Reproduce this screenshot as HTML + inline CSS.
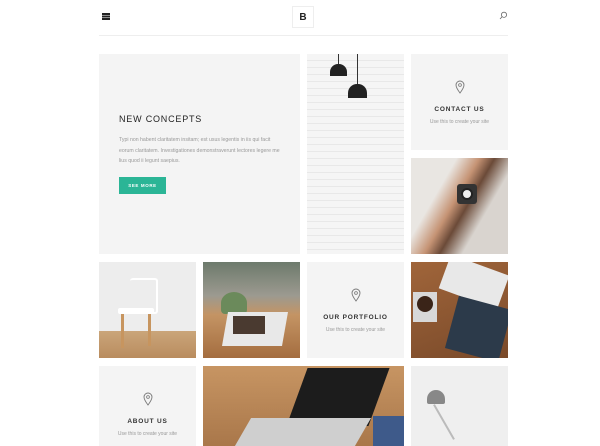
<!DOCTYPE html>
<html><head><style>
body{margin:0;width:600px;height:442px;overflow:hidden;background:#fff;font-family:"Liberation Sans",sans-serif;position:relative}
.a{position:absolute}
.o{overflow:hidden}
.card{background:#f4f4f4;text-align:center}
.card h4{margin:0;font-size:6.5px;letter-spacing:.8px;color:#333;font-weight:bold}
.card p{margin:6px 0 0;font-size:5px;color:#999}
</style></head><body>
<div class="a" style="left:102px;top:13px;width:8px;height:1.6px;background:#222;box-shadow:0 2.5px #222,0 5px #222"></div>
<div class="a" style="left:292px;top:6px;width:22px;height:22px;border:1px solid #eee;box-sizing:border-box;font-weight:bold;font-size:10px;text-align:center;line-height:21px;color:#222">B</div>
<svg class="a" style="left:499px;top:11px" width="9" height="9"><circle cx="5" cy="3.8" r="2.6" fill="none" stroke="#666" stroke-width=".8"/><line x1="3.2" y1="5.6" x2="1" y2="8" stroke="#666" stroke-width=".8"/></svg>
<div class="a" style="left:99px;top:35px;width:409px;height:1px;background:#eee"></div>

<div class="a card" style="left:99px;top:54px;width:201px;height:200px;text-align:left">
<div style="position:absolute;left:20px;top:60px;font-size:9px;letter-spacing:.8px;color:#222">NEW CONCEPTS</div>
<div style="position:absolute;left:20px;top:81px;width:165px;font-size:5.2px;line-height:10.5px;color:#999">Typi non habent claritatem insitam; est usus legentis in iis qui facit eorum claritatem. Investigationes demonstraverunt lectores legere me lius quod ii legunt saepius.</div>
<div style="position:absolute;left:20px;top:123px;width:47px;height:17px;background:#2bb596;color:#fff;font-size:4.5px;font-weight:bold;letter-spacing:.6px;text-align:center;line-height:17px">SEE MORE</div>
</div>

<div class="a o" style="left:307px;top:54px;width:97px;height:200px;background:repeating-linear-gradient(#f5f5f5 0 6px,#e8e8e8 6px 7px)">
<div class="a" style="left:31px;top:0;width:1px;height:10px;background:#333"></div>
<div class="a" style="left:23px;top:10px;width:17px;height:12px;background:#222;border-radius:8px 8px 0 0"></div>
<div class="a" style="left:50px;top:0;width:1px;height:30px;background:#333"></div>
<div class="a" style="left:41px;top:30px;width:19px;height:14px;background:#222;border-radius:9px 9px 0 0"></div>
</div>

<div class="a card" style="left:411px;top:54px;width:97px;height:96px">
<svg style="margin-top:26px" width="10" height="14"><path d="M5 13C2 9 1 7 1 5a4 4 0 0 1 8 0c0 2-1 4-4 8z" fill="none" stroke="#777" stroke-width=".9"/><circle cx="5" cy="5" r="1.4" fill="none" stroke="#777" stroke-width=".8"/></svg>
<h4 style="margin-top:7px">CONTACT US</h4><p>Use this to create your site</p></div>

<div class="a o" style="left:411px;top:158px;width:97px;height:96px;background:linear-gradient(120deg,#e9e6e2 30%,#c59374 45%,#6b4a38 55%,#d9d4cf 70%)">
<div class="a" style="left:46px;top:26px;width:20px;height:20px;background:#333;border-radius:3px"></div>
<div class="a" style="left:50px;top:30px;width:12px;height:12px;background:#eee;border-radius:50%;border:2px solid #222;box-sizing:border-box"></div></div>

<div class="a o" style="left:99px;top:262px;width:97px;height:96px;background:linear-gradient(#ededed 72%,#caa57a 72%,#b98c5e)">
<div class="a" style="left:19px;top:46px;width:36px;height:6px;background:#fff;border-radius:2px"></div>
<div class="a" style="left:31px;top:16px;width:26px;height:32px;border:2px solid #fff;border-radius:3px;border-left:none"></div>
<div class="a" style="left:22px;top:52px;width:3px;height:34px;background:#c7955f"></div>
<div class="a" style="left:49px;top:52px;width:3px;height:32px;background:#c7955f"></div></div>

<div class="a o" style="left:203px;top:262px;width:97px;height:96px;background:linear-gradient(#6d7a6c 0,#9c9a90 35%,#c49464 55%,#a46d3f)">
<div class="a" style="left:18px;top:30px;width:26px;height:22px;background:#6b8a5b;border-radius:50% 50% 4px 4px"></div>
<div class="a" style="left:22px;top:50px;width:60px;height:34px;background:#e8e8e8;transform:skewX(-10deg)"></div>
<div class="a" style="left:30px;top:54px;width:32px;height:18px;background:#4a3a30"></div></div>

<div class="a card" style="left:307px;top:262px;width:97px;height:96px">
<svg style="margin-top:26px" width="10" height="14"><path d="M5 13C2 9 1 7 1 5a4 4 0 0 1 8 0c0 2-1 4-4 8z" fill="none" stroke="#777" stroke-width=".9"/><circle cx="5" cy="5" r="1.4" fill="none" stroke="#777" stroke-width=".8"/></svg>
<h4 style="margin-top:7px">OUR PORTFOLIO</h4><p>Use this to create your site</p></div>

<div class="a o" style="left:411px;top:262px;width:97px;height:96px;background:linear-gradient(160deg,#a0653a,#7a4a2a)">
<div class="a" style="left:32px;top:2px;width:62px;height:36px;background:#e8e8e8;transform:rotate(20deg)"></div>
<div class="a" style="left:40px;top:40px;width:55px;height:54px;background:#2c3a4a;transform:rotate(15deg)"></div>
<div class="a" style="left:2px;top:30px;width:24px;height:30px;background:#d8d8d8"></div>
<div class="a" style="left:6px;top:34px;width:16px;height:16px;background:#3a2418;border-radius:50%"></div></div>

<div class="a card" style="left:99px;top:366px;width:97px;height:80px">
<svg style="margin-top:26px" width="10" height="14"><path d="M5 13C2 9 1 7 1 5a4 4 0 0 1 8 0c0 2-1 4-4 8z" fill="none" stroke="#777" stroke-width=".9"/><circle cx="5" cy="5" r="1.4" fill="none" stroke="#777" stroke-width=".8"/></svg>
<h4 style="margin-top:7px">ABOUT US</h4><p>Use this to create your site</p></div>

<div class="a o" style="left:203px;top:366px;width:201px;height:80px;background:linear-gradient(#c79563,#a9774a)">
<div class="a" style="left:94px;top:2px;width:82px;height:58px;background:#1c1c1c;transform:skewX(-20deg)"></div>
<div class="a" style="left:40px;top:52px;width:120px;height:28px;background:#cfcfcf;transform:skewX(-30deg)"></div>
<div class="a" style="left:170px;top:50px;width:31px;height:30px;background:#3e5a8a"></div></div>

<div class="a o" style="left:411px;top:366px;width:97px;height:80px;background:#efefef">
<div class="a" style="left:16px;top:24px;width:18px;height:14px;background:#888;border-radius:9px 9px 2px 2px"></div>
<div class="a" style="left:32px;top:36px;width:2px;height:40px;background:#bbb;transform:rotate(-30deg)"></div></div>
</body></html>
